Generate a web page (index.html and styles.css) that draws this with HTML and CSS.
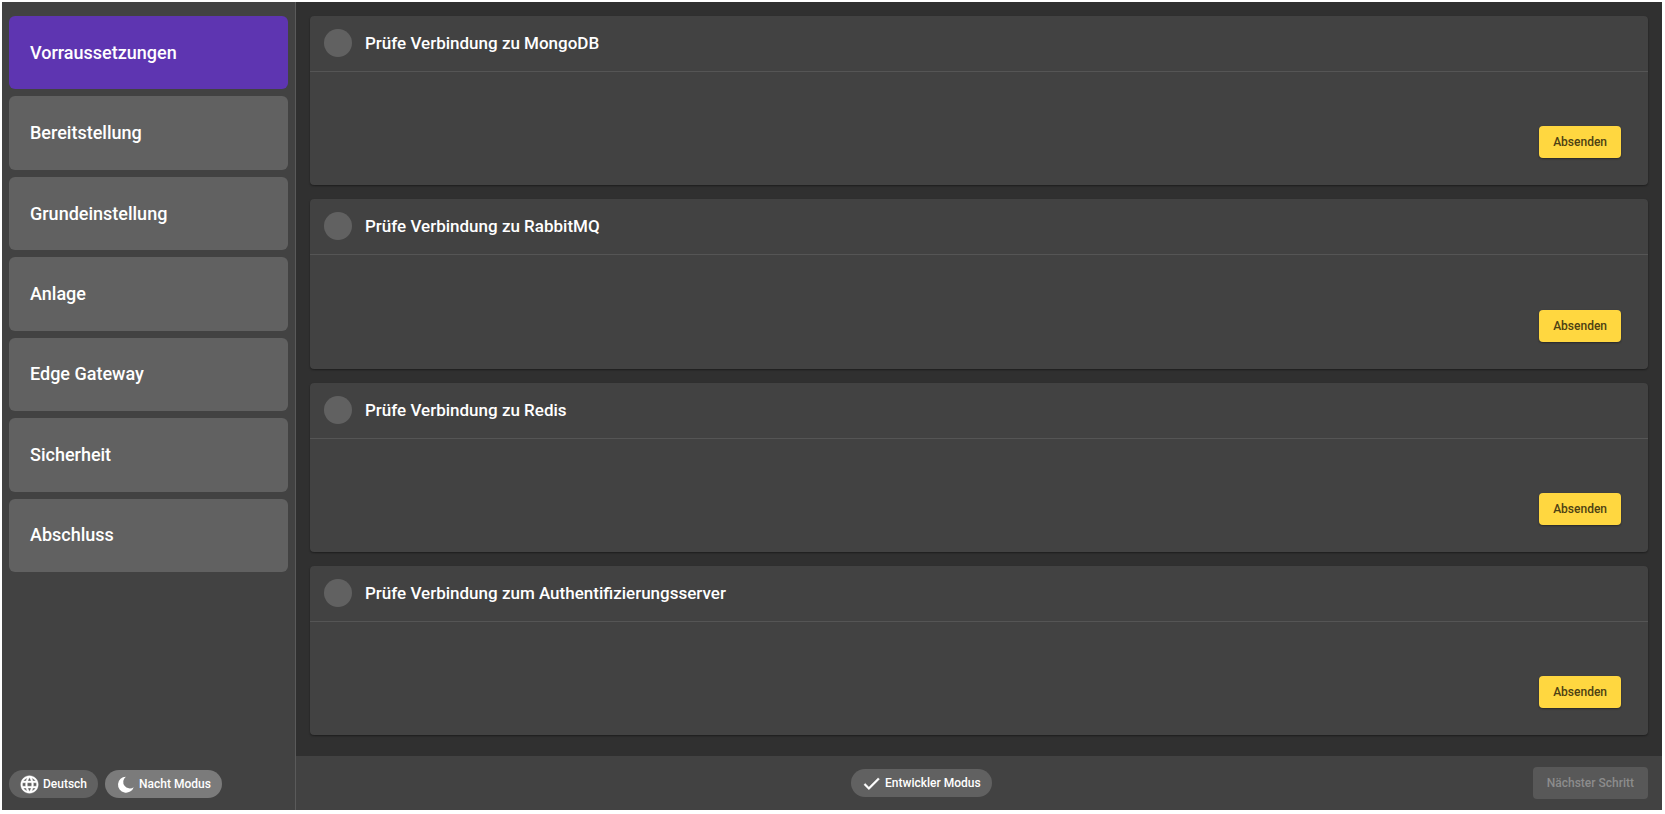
FILE: index.html
```html
<!DOCTYPE html>
<html lang="de">
<head>
<meta charset="utf-8">
<title>Einrichtung</title>
<link rel="stylesheet" href="styles.css">
</head>
<body>
<div class="app">
  <aside class="sidebar">
    <nav class="steps">
      <a class="step step-active" href="#voraussetzungen" aria-current="step">Vorraussetzungen</a>
      <a class="step" href="#bereitstellung">Bereitstellung</a>
      <a class="step" href="#grundeinstellung">Grundeinstellung</a>
      <a class="step" href="#anlage">Anlage</a>
      <a class="step" href="#gateway">Edge Gateway</a>
      <a class="step" href="#sicherheit">Sicherheit</a>
      <a class="step" href="#abschluss">Abschluss</a>
    </nav>
    <div class="chips">
      <button class="chip" type="button">
        <svg class="icon" viewBox="0 0 24 24" aria-hidden="true"><path d="M11.99 2C6.47 2 2 6.48 2 12s4.47 10 9.99 10C17.52 22 22 17.52 22 12S17.52 2 11.99 2zm6.93 6h-2.95c-.32-1.25-.78-2.45-1.38-3.56 1.84.63 3.37 1.91 4.33 3.56zM12 4.04c.83 1.2 1.48 2.53 1.91 3.96h-3.82c.43-1.43 1.08-2.76 1.91-3.96zM4.26 14C4.1 13.36 4 12.69 4 12s.1-1.36.26-2h3.38c-.08.66-.14 1.32-.14 2s.06 1.34.14 2H4.26zm.82 2h2.95c.32 1.25.78 2.45 1.38 3.56-1.84-.63-3.37-1.9-4.33-3.56zm2.95-8H5.08c.96-1.66 2.49-2.93 4.33-3.56C8.81 5.55 8.35 6.75 8.03 8zM12 19.96c-.83-1.2-1.48-2.53-1.91-3.96h3.82c-.43 1.43-1.08 2.76-1.91 3.96zM14.34 14H9.66c-.09-.66-.16-1.32-.16-2s.07-1.35.16-2h4.68c.09.65.16 1.32.16 2s-.07 1.34-.16 2zm.25 5.56c.6-1.11 1.06-2.31 1.38-3.56h2.95c-.96 1.65-2.49 2.93-4.33 3.56zM16.36 14c.08-.66.14-1.32.14-2s-.06-1.34-.14-2h3.38c.16.64.26 1.31.26 2s-.1 1.36-.26 2h-3.38z" stroke="currentColor" stroke-width="0.4"/></svg>
        Deutsch
      </button>
      <button class="chip chip-selected" type="button" aria-pressed="true">
        <svg class="icon" viewBox="0 0 24 24" aria-hidden="true"><path d="M21.4 15A9.2 9.2 0 1 1 12.4 3 6.9 6.9 0 0 0 21.4 15z"/></svg>
        Nacht Modus
      </button>
    </div>
  </aside>
  <main class="content">
    <div class="cards">
      <section class="card">
        <header class="card-head"><span class="status"></span><h2 class="card-title">Prüfe Verbindung zu MongoDB</h2></header>
        <div class="card-body"><button class="submit" type="button">Absenden</button></div>
      </section>
      <section class="card">
        <header class="card-head"><span class="status"></span><h2 class="card-title">Prüfe Verbindung zu RabbitMQ</h2></header>
        <div class="card-body"><button class="submit" type="button">Absenden</button></div>
      </section>
      <section class="card">
        <header class="card-head"><span class="status"></span><h2 class="card-title">Prüfe Verbindung zu Redis</h2></header>
        <div class="card-body"><button class="submit" type="button">Absenden</button></div>
      </section>
      <section class="card">
        <header class="card-head"><span class="status"></span><h2 class="card-title">Prüfe Verbindung zum Authentifizierungsserver</h2></header>
        <div class="card-body"><button class="submit" type="button">Absenden</button></div>
      </section>
    </div>
    <footer class="footer">
      <span class="footer-start"></span>
      <button class="chip" type="button">
        <svg class="icon" viewBox="0 0 24 24" aria-hidden="true"><path d="M9 16.17L4.83 12l-1.42 1.41L9 19 21 7l-1.41-1.41z" stroke="currentColor" stroke-width="0.6"/></svg>
        Entwickler Modus
      </button>
      <button class="next" type="button" disabled>Nächster Schritt</button>
    </footer>
  </main>
</div>
</body>
</html>
```
FILE: styles.css
```css
* {
  box-sizing: border-box;
}

body {
  margin: 0;
  padding: 2px 3px 4px 2px;
  height: 100vh;
  background: #fff;
  color: #fff;
  font-family: Roboto, sans-serif;
  font-weight: 500;
}

button {
  border: 0;
  font: inherit;
  color: inherit;
}

.app {
  display: flex;
  height: 100%;
  background: #303030;
}

.sidebar {
  display: flex;
  flex-direction: column;
  justify-content: space-between;
  flex: 0 0 294px;
  padding: 14px 7px 12px;
  border-right: 1px solid #5a5a5a;
  background: #424242;
}

.steps {
  display: grid;
  grid-auto-rows: 1fr;
  gap: 7px;
  min-height: 556px;
}

.step {
  display: flex;
  align-items: center;
  padding: 0 21px;
  border-radius: 6px;
  background: #616161;
  color: #fff;
  font-size: 18px;
  line-height: 24px;
  text-decoration: none;
}

.step-active {
  background: #5e35b1;
}

.chips {
  display: flex;
  gap: 7px;
}

.chip {
  display: flex;
  align-items: center;
  gap: 3px;
  height: 28px;
  padding: 0 11px 0 10px;
  border-radius: 14px;
  background: #616161;
  font-size: 12px;
  line-height: 16px;
  white-space: nowrap;
}

.chip-selected {
  background: #7b7b7b;
}

.icon {
  width: 21px;
  height: 21px;
  fill: currentColor;
}

.content {
  display: flex;
  flex-direction: column;
  flex: 1;
  min-width: 0;
}

.cards {
  display: grid;
  grid-auto-rows: 1fr;
  flex: 1;
  gap: 14px;
  padding: 14px 14px 21px;
}

.card {
  display: flex;
  flex-direction: column;
  border-radius: 4px;
  background: #424242;
  box-shadow: 0 1px 2px rgba(0, 0, 0, 0.4);
}

.card-head {
  display: flex;
  align-items: center;
  gap: 13px;
  padding: 13px 14px 14px;
  border-bottom: 1px solid #555;
}

.status {
  width: 28px;
  height: 28px;
  border-radius: 50%;
  background: #616161;
}

.card-title {
  margin: 0;
  font-size: 17px;
  font-weight: 500;
  line-height: 24px;
}

.card-body {
  display: flex;
  flex: 1;
  justify-content: flex-end;
  align-items: flex-end;
  padding: 27px;
}

.submit,
.next {
  height: 32px;
  padding: 0 14px;
  border-radius: 4px;
  font-size: 12px;
  line-height: 16px;
}

.submit {
  background: #ffd740;
  color: #4d4113;
  box-shadow: 0 1px 2px rgba(0, 0, 0, 0.4);
}

.footer {
  display: flex;
  justify-content: space-between;
  align-items: center;
  height: 54px;
  padding: 0 14px;
  background: #424242;
}

.next {
  background: #585858;
  color: #8c8c8c;
}
```
